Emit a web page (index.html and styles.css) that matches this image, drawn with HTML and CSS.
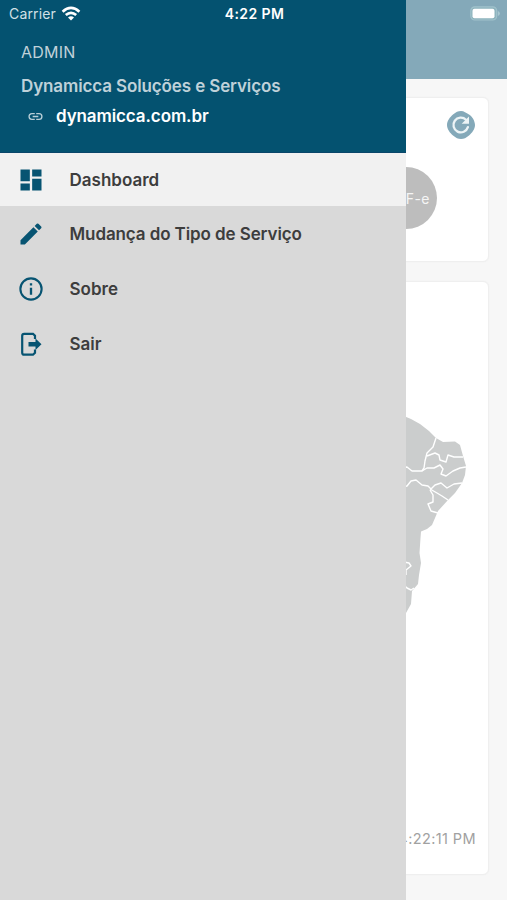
FILE: index.html
```html
<!DOCTYPE html>
<html lang="pt-BR">
<head>
<meta charset="utf-8">
<meta name="viewport" content="width=device-width">
<title>Dynamicca</title>
<link rel="stylesheet" href="styles.css">
</head>
<body>
<div class="app">
  <div class="page">
    <header class="topbar"></header>
    <main class="content">
      <section class="card services">
        <button class="refresh" aria-label="Atualizar">
          <svg viewBox="0 0 30 30" width="30" height="30">
            <path d="M15 1C18 1 20 3 23 4.500S29 11 29 15s-3 8-6 10.500S18 29 15 29s-5-1-8-3.500S1 19 1 15s3-8 6-10.500S12 1 15 1Z" fill="#84a9b9"/>
            <path d="M21.900 17.200A7.400 7.400 0 1 1 20 9.700" fill="none" stroke="#edf4f6" stroke-width="2.300" stroke-linecap="round"/>
            <path d="M23 6.500v7.300h-7.300Z" fill="#edf4f6"/>
          </svg>
        </button>
        <div class="bubble">NF-e</div>
      </section>
      <section class="card map-card">
        <svg class="map" viewBox="396 410 80 210" width="80" height="210">
          <path fill="#cbcdcd" d="M396 415 405 416.500 411 419 420 424 429 431 436 438 443 442 455 441.500 460 445 463 456 466 466 465 475 462 483 455 493 448 500 438 511 432 525 427 529 421 531.500 420.500 538 419.500 553 421 563 419 575 418 584 412 591 411 604 406 613 396 619Z"/>
          <g class="borders">
            <path d="M436 438 433 447 427 453 425 461 424 468 422 471"/>
            <path d="M427 456 435 453 439 455 440 460 446 462 448 455 454 457 463 457"/>
            <path d="M396 468 407 467 412 471 422 471 427 468 434 468 440 465 443 469 441 474 446 476 453 471 460 468 466 467"/>
            <path d="M396 488 407 486 411 481 416 480 422 485 428 486 431 489 435 485 441 483 447 488 454 484 462 483"/>
            <path d="M430 489 437 493 442 496 448 500"/>
            <path d="M430 490 433 495 433 502 428 504 431 511 438 513"/>
            <path d="M404 562 409 563 411 566 406 570 406 575"/>
            <path d="M404 585 407 588 411 590 414 588"/>
          </g>
        </svg>
        <div class="updated">4:22:11 PM</div>
      </section>
    </main>
  </div>

  <aside class="drawer">
    <header class="profile">
      <div class="role">ADMIN</div>
      <div class="company">Dynamicca Soluções e Serviços</div>
      <a class="site">
        <svg viewBox="0 0 24 24" width="17" height="17" fill="#b9cfd8"><path d="M3.900 12c0-1.710 1.390-3.100 3.100-3.100h4V7H7a5 5 0 0 0 0 10h4v-1.900H7c-1.710 0-3.100-1.390-3.100-3.100zM8 13h8v-2H8v2zm9-6h-4v1.900h4a3.100 3.100 0 0 1 0 6.200h-4V17h4a5 5 0 0 0 0-10z"/></svg>
        <span>dynamicca.com.br</span>
      </a>
    </header>
    <nav class="menu">
      <a class="item active">
        <svg viewBox="0 0 24 24" width="28" height="28"><path d="M3 13h8V3H3v10zm0 8h8v-6H3v6zm10 0h8V11h-8v10zm0-18v6h8V3h-8z"/></svg>
        <span>Dashboard</span>
      </a>
      <a class="item long">
        <svg viewBox="0 0 24 24" width="28" height="28"><path d="M3 17.250V21h3.750L17.810 9.940l-3.750-3.750L3 17.250zM20.710 7.040a1 1 0 0 0 0-1.410l-2.340-2.340a1 1 0 0 0-1.410 0l-1.830 1.830 3.750 3.750 1.830-1.830z"/></svg>
        <span>Mudança do Tipo de Serviço</span>
      </a>
      <a class="item">
        <svg viewBox="0 0 24 24" width="28" height="28"><path d="M11 17h2v-6h-2v6zm1-15a10 10 0 1 0 0 20 10 10 0 0 0 0-20zm0 18.200a8.200 8.200 0 1 1 0-16.400 8.200 8.200 0 0 1 0 16.400zM11 9h2V7h-2v2z"/></svg>
        <span>Sobre</span>
      </a>
      <a class="item">
        <svg viewBox="0 0 28 28" width="28" height="28"><path d="M18 9V5.800L16 3.800H7.200Q5.200 3.800 5.200 5.800V22.700Q5.200 24.700 7.200 24.700H16L18 22.700V19.500" fill="none" stroke="#075472" stroke-width="2.200"/><path d="M11.500 12h7V8.500l6 5.700-6 5.700V16.400h-7Z"/></svg>
        <span>Sair</span>
      </a>
    </nav>
  </aside>

  <div class="statusbar">
    <div class="carrier">
      <span>Carrier</span>
      <svg viewBox="0 0 20 15" width="20" height="15">
        <g fill="none" stroke="#fff" stroke-width="2.700"><path d="M1.600 5.700Q10-1.900 18.400 5.700"/><path d="M4.800 9.100Q10 4.500 15.200 9.100"/></g>
        <path d="M7 11.400Q10 8.900 13 11.400L10 14.400Z" fill="#fff"/>
      </svg>
    </div>
    <div class="clock">4:22 PM</div>
    <svg class="battery" viewBox="0 0 31 15" width="31" height="15">
      <rect x="1.800" y=".8" width="25.900" height="13.200" rx="4" fill="#8db3bd" stroke="#a0c2cb" stroke-width="1.200"/>
      <rect x="3.500" y="2.800" width="22" height="9.400" rx="2" fill="#fff"/>
      <path d="M28.900 5v5q2-.7 2-2.500t-2-2.500Z" fill="#a7c6cf"/>
    </svg>
  </div>
</div>
</body>
</html>
```

FILE: styles.css
```css
* { box-sizing: border-box; }

body {
  margin: 0;
  font-family: Inter, "Liberation Sans", sans-serif;
}

.app {
  position: relative;
  width: 507px;
  height: 900px;
  overflow: hidden;
  background: #f7f7f7;
}

.page {
  display: flex;
  flex-direction: column;
  height: 100%;
}

.topbar {
  height: 79px;
  background: #84a9b9;
}

.content {
  display: flex;
  flex-direction: column;
  gap: 19px;
  padding: 18px 18px 0;
}

.card {
  display: flex;
  flex-direction: column;
  align-items: flex-end;
  border: 1px solid #efefef;
  border-radius: 6px;
  background: #fff;
  box-shadow: 0 0 2px rgba(0, 0, 0, 0.04);
}

.services {
  height: 165px;
  padding: 12px 12px 0;
}

.refresh {
  width: 30px;
  height: 30px;
  padding: 0;
  border: 0;
  background: none;
}

.bubble {
  display: flex;
  align-items: center;
  justify-content: flex-end;
  width: 62px;
  height: 62px;
  margin: 27px 39px 0 0;
  padding-right: 7px;
  border-radius: 50%;
  background: #bdbdbd;
  color: #f5f5f5;
  font-size: 14px;
  letter-spacing: 0.5px;
}

.map-card {
  height: 594px;
  padding: 128px 12px 0;
}

.borders {
  fill: none;
  stroke: #fff;
  stroke-width: 1.4;
  stroke-linejoin: round;
}

.updated {
  margin-top: 210px;
  color: #a1a1a1;
  font-size: 14.5px;
  line-height: 18px;
  letter-spacing: 0.4px;
}

.drawer {
  position: absolute;
  inset: 0 auto 0 0;
  width: 406px;
  background: #d9d9d9;
  color: #3d3d3d;
  font-weight: 600;
}

.profile {
  display: flex;
  flex-direction: column;
  height: 153px;
  padding: 40px 21px 0;
  border-bottom: 1px solid #0a466a;
  background: #045270;
}

.role {
  color: #c0d1d9;
  font-size: 16px;
  font-weight: 400;
  line-height: 24px;
  letter-spacing: 0.2px;
}

.company {
  margin-top: 10px;
  color: #bfd1d9;
  font-size: 17px;
  line-height: 24px;
  letter-spacing: -0.12px;
}

.site {
  display: flex;
  align-items: center;
  gap: 12px;
  height: 24px;
  margin-top: 6px;
  padding-left: 6px;
  color: #fff;
  font-size: 17px;
  letter-spacing: -0.1px;
}

.menu {
  display: flex;
  flex-direction: column;
}

.item {
  display: flex;
  align-items: center;
  gap: 24.5px;
  height: 55px;
  padding-left: 17px;
  font-size: 17px;
}

.item svg { fill: #075472; }

.item span { padding-top: 1px; }

.long { letter-spacing: -0.1px; }

.active {
  height: 53px;
  background: #f1f1f1;
}

.statusbar {
  position: absolute;
  inset: 0 0 auto 0;
  display: grid;
  grid-template-columns: 1fr auto 1fr;
  align-items: center;
  height: 27px;
  padding: 0 7px 0 9px;
  color: #fff;
}

.carrier {
  display: flex;
  align-items: center;
  gap: 5px;
  color: #d2e0e6;
  font-size: 14px;
  letter-spacing: 0.15px;
}

.clock {
  font-size: 14px;
  font-weight: 600;
  letter-spacing: 0.4px;
}

.battery { justify-self: end; }
```
